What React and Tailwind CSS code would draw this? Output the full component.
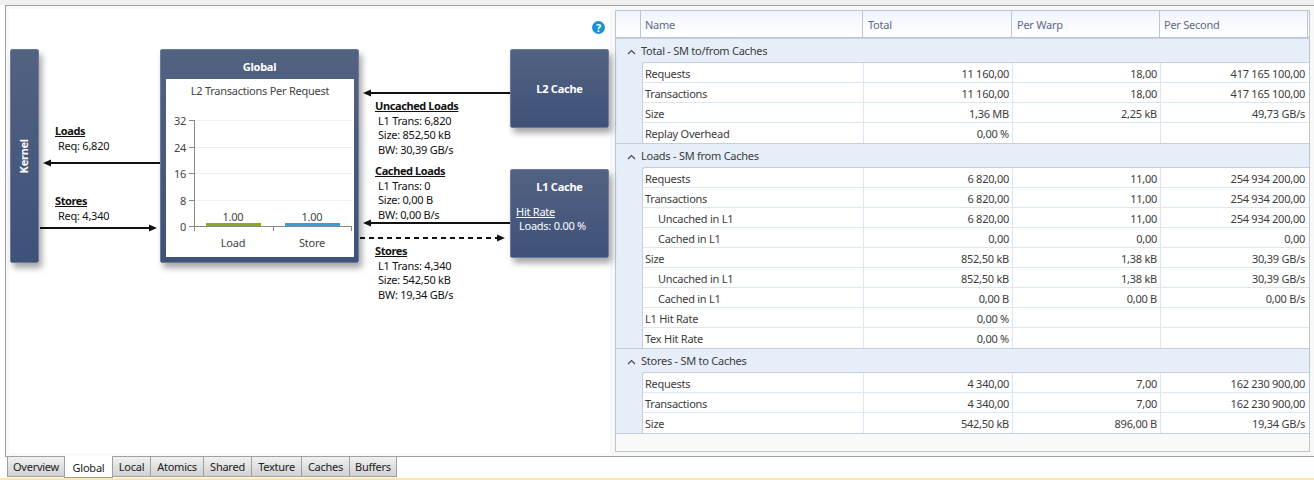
const F = "font-['Noto_Sans',sans-serif]";

const groups = [
  { title: "Total - SM to/from Caches", rows: [
    ["Requests", "11 160,00", "18,00", "417 165 100,00"],
    ["Transactions", "11 160,00", "18,00", "417 165 100,00"],
    ["Size", "1,36 MB", "2,25 kB", "49,73 GB/s"],
    ["Replay Overhead", "0,00 %", "", ""],
  ]},
  { title: "Loads - SM from Caches", rows: [
    ["Requests", "6 820,00", "11,00", "254 934 200,00"],
    ["Transactions", "6 820,00", "11,00", "254 934 200,00"],
    ["Uncached in L1", "6 820,00", "11,00", "254 934 200,00", 1],
    ["Cached in L1", "0,00", "0,00", "0,00", 1],
    ["Size", "852,50 kB", "1,38 kB", "30,39 GB/s"],
    ["Uncached in L1", "852,50 kB", "1,38 kB", "30,39 GB/s", 1],
    ["Cached in L1", "0,00 B", "0,00 B", "0,00 B/s", 1],
    ["L1 Hit Rate", "0,00 %", "", ""],
    ["Tex Hit Rate", "0,00 %", "", ""],
  ]},
  { title: "Stores - SM to Caches", rows: [
    ["Requests", "4 340,00", "7,00", "162 230 900,00"],
    ["Transactions", "4 340,00", "7,00", "162 230 900,00"],
    ["Size", "542,50 kB", "896,00 B", "19,34 GB/s"],
  ]},
];

const COLS = "grid grid-cols-[221px_149px_148px_148px]";

function Caret() {
  return (
    <svg width="26" height="24" viewBox="0 0 26 24" className="shrink-0">
      <path d="M12 15 L15.5 11.5 L19 15" fill="none" stroke="#4a4a4a" strokeWidth="1.2" />
    </svg>
  );
}

function Group({ g }) {
  return (
    <div>
      <div className="h-[24px] flex items-center bg-[#e6eefa] border-t border-[#c4d0de] text-[#3c3c3c]">
        <Caret />
        <span className="pt-[1px] -ml-px">{g.title}</span>
      </div>
      <div className="flex bg-[#e6eefa]">
        <div className="w-[26px] shrink-0" />
        <div className="flex-1 bg-white border-t border-l border-[#c4d0de] rounded-tl-[3px]">
          {g.rows.map((r, i) => (
            <div key={i} className={`${COLS} h-[20px] items-stretch leading-[16px] border-b border-[#dbe6f3] last:border-b-0`}>
              <div className={`pt-[3px] text-[#3c3c3c] border-r border-[#dbe6f3] ${r[4] ? "pl-[15px]" : "pl-[2px]"}`}>{r[0]}</div>
              <div className="text-right pt-[3px] pr-[3px] text-[#3c3c3c] border-r border-[#dbe6f3]">{r[1]}</div>
              <div className="text-right pt-[3px] pr-[3px] text-[#3c3c3c] border-r border-[#dbe6f3]">{r[2]}</div>
              <div className="text-right pt-[3px] pr-[4px] text-[#3c3c3c]">{r[3]}</div>
            </div>
          ))}
        </div>
      </div>
    </div>
  );
}

function Table() {
  return (
    <div className="w-[695px] h-[442px] ml-[5px] mt-[1px] flex flex-col border border-[#bcc6d2] bg-[#f9f9f9] overflow-hidden">
      <div className="h-[27px] shrink-0 flex bg-gradient-to-b from-[#f0f4fb] to-white text-[#5d6b85] border-b border-[#bcc6d2]">
        <div className="w-[25px] border-r border-[#bcc6d2]" />
        <div className="w-[222px] flex items-center pt-[2px] pl-[4px] border-r border-[#bcc6d2]">Name</div>
        <div className="w-[149px] flex items-center pt-[2px] pl-[5px] border-r border-[#bcc6d2]">Total</div>
        <div className="w-[148px] flex items-center pt-[2px] pl-[5px] border-r border-[#bcc6d2]">Per Warp</div>
        <div className="w-[148px] flex items-center pt-[2px] pl-[4px] border-r border-[#bcc6d2]">Per Second</div>
      </div>
      {groups.map((g, i) => <Group key={i} g={g} />)}
      <div className="border-t border-[#c4d0de] flex-1" />
    </div>
  );
}

const nodeCls = "absolute rounded-[2px] bg-gradient-to-b from-[#526281] to-[#3e5179] border border-[#6b7b98] shadow-[3px_5px_6px_rgba(0,0,0,0.35)] text-white";

function Lines({ x, y, title, lines }) {
  return (
    <div className="absolute text-[#111] leading-[14.6px]" style={{ left: x, top: y }}>
      <div className="font-bold underline text-[11px] tracking-[-0.4px]">{title}</div>
      {lines.map((l, i) => <div key={i} className="pl-[3px] whitespace-nowrap">{l}</div>)}
    </div>
  );
}

function Chart() {
  const grid = [[32, 120], [24, 147], [16, 173], [8, 200]];
  return (
    <svg className="absolute left-[5px] top-[29px] bg-white" width="188" height="178" viewBox="166 79 188 178"
      fontFamily="'Noto Sans',sans-serif" fontSize="11" fill="#444">
      <text x="260" y="95" textAnchor="middle">L2 Transactions Per Request</text>
      {grid.map(([v, y]) => (
        <g key={v}>
          <line x1="194" x2="352" y1={y + 0.5} y2={y + 0.5} stroke="#eeeeee" />
          <line x1="189" x2="194" y1={y + 0.5} y2={y + 0.5} stroke="#888" />
          <text x="186" y={y + 5} textAnchor="end">{v}</text>
        </g>
      ))}
      <text x="186" y="231" textAnchor="end">0</text>
      <line x1="194.5" x2="194.5" y1="120" y2="231" stroke="#888" />
      <line x1="189" x2="351.5" y1="226.5" y2="226.5" stroke="#888" />
      <line x1="273.5" x2="273.5" y1="226" y2="231" stroke="#888" />
      <line x1="351.5" x2="351.5" y1="226" y2="231" stroke="#888" />
      <rect x="206" y="223" width="55" height="3" fill="#8cab14" />
      <rect x="285" y="223" width="55" height="3" fill="#34a0d8" />
      <text x="233" y="221" textAnchor="middle">1.00</text>
      <text x="312" y="221" textAnchor="middle">1.00</text>
      <text x="233" y="247" textAnchor="middle">Load</text>
      <text x="312" y="247" textAnchor="middle">Store</text>
    </svg>
  );
}

function Arrows() {
  const O = 9;
  const L = (x1, x2, y, dash) => (
    <line x1={x1} x2={x2} y1={y} y2={y} stroke="#111" strokeWidth="2" strokeDasharray={dash} />
  );
  const left = (x, y) => <path d={`M${x} ${y} l8 -3.5 v7 z`} fill="#111" />;
  const right = (x, y) => <path d={`M${x} ${y} l-8 -3.5 v7 z`} fill="#111" />;
  return (
    <svg className="absolute left-0 top-0 pointer-events-none" width="601" height="300" viewBox={`${O} ${O} 601 300`}>
      {L(50, 160, 163)}{left(43, 163)}
      {L(40, 152, 228)}{right(157, 228)}
      {L(370, 510, 93)}{left(363, 93)}
      {L(370, 510, 223)}{left(363, 223)}
      {L(360, 498, 238, "5 4")}{right(505, 238)}
    </svg>
  );
}

function Tab({ w, children, active }) {
  if (active) {
    return (
      <div className="h-[22px] -mt-[1px] -ml-px bg-white border border-t-0 border-[#a0a0a0] flex items-center justify-center pt-[3px] text-[#222] relative" style={{ width: w }}>
        {children}
      </div>
    );
  }
  return (
    <div className="h-[20px] pt-[1px] bg-gradient-to-b from-[#f0f0f0] to-[#d2d2d2] border border-t-0 border-[#a0a0a0] -ml-px first:ml-0 flex items-center justify-center text-[#222]" style={{ width: w }}>
      {children}
    </div>
  );
}

export default function App() {
  return (
    <div className={`${F} text-[11px] tracking-[-0.25px] w-[1314px] h-[480px] overflow-hidden bg-white flex flex-col`}>
      <div className="h-[5px] bg-[#f0f0f0] shrink-0" />
      <div className="h-[452px] shrink-0 ml-[5px] border-t border-l border-b border-[#a0a0a0] bg-[#f8f8f8] p-[3px] flex">
        <div className="relative w-[601px] h-[444px] bg-white shrink-0">
          <Arrows />
          <svg className="absolute left-[582px] top-[11px]" width="16" height="16" viewBox="0 0 16 16">
            <circle cx="7.5" cy="7.5" r="6.5" fill="#1592d8" />
            <text x="7.5" y="11.5" textAnchor="middle" fontSize="11" fontWeight="700" fill="#fff" fontFamily="'Noto Sans',sans-serif">?</text>
          </svg>

          <div className={`${nodeCls} left-[1px] top-[40px] w-[29px] h-[214px] flex items-center justify-center`}>
            <span className="-rotate-90 font-bold text-[11px] whitespace-nowrap">Kernel</span>
          </div>

          <div className={`${nodeCls} left-[151px] top-[40px] w-[199px] h-[214px]`}>
            <div className="absolute left-0 right-0 top-[9px] text-center font-bold">Global</div>
            <Chart />
          </div>

          <div className={`${nodeCls} left-[501px] top-[40px] w-[99px] h-[79px] flex items-center justify-center font-bold pt-[2px]`}>L2 Cache</div>

          <div className={`${nodeCls} left-[501px] top-[160px] w-[99px] h-[89px]`}>
            <div className="text-center font-bold mt-[9px]">L1 Cache</div>
            <div className="pl-[5px] mt-[9px] leading-[14px]">
              <div className="underline">Hit Rate</div>
              <div className="pl-[3px]">Loads: 0.00 %</div>
            </div>
          </div>

          <Lines x={46} y={115} title="Loads" lines={["Req: 6,820"]} />
          <Lines x={46} y={185} title="Stores" lines={["Req: 4,340"]} />
          <Lines x={366} y={90} title="Uncached Loads" lines={["L1 Trans: 6,820", "Size: 852,50 kB", "BW: 30,39 GB/s"]} />
          <Lines x={366} y={155} title="Cached Loads" lines={["L1 Trans: 0", "Size: 0,00 B", "BW: 0,00 B/s"]} />
          <Lines x={366} y={235} title="Stores" lines={["L1 Trans: 4,340", "Size: 542,50 kB", "BW: 19,34 GB/s"]} />
        </div>
        <Table />
      </div>
      <div className="h-[21px] shrink-0 flex pl-[7px] bg-white">
        <Tab w={58}>Overview</Tab>
        <Tab w={49} active>Global</Tab>
        <Tab w={39}>Local</Tab>
        <Tab w={54}>Atomics</Tab>
        <Tab w={49}>Shared</Tab>
        <Tab w={51}>Texture</Tab>
        <Tab w={49}>Caches</Tab>
        <Tab w={48}>Buffers</Tab>
      </div>
      <div className="flex-1 bg-[#fde6a8]" />
    </div>
  );
}
